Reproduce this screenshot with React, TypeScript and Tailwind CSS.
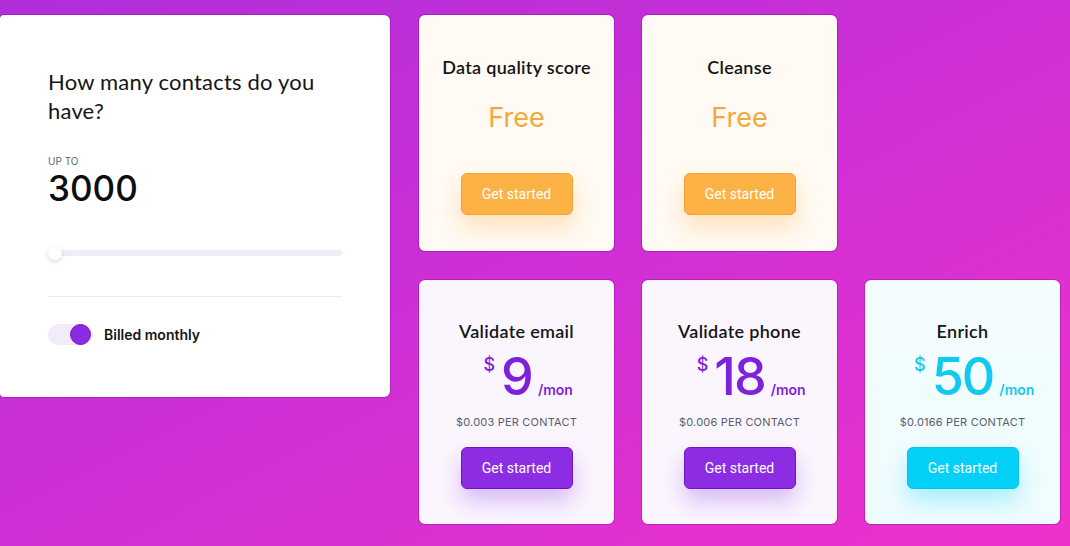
import React from "react";

type Plan = {
  title: string;
  price?: string;
  perContact?: string;
  tone: "orange" | "purple" | "cyan";
};

const topPlans: Plan[] = [
  { title: "Data quality score", tone: "orange" },
  { title: "Cleanse", tone: "orange" },
];

const bottomPlans: Plan[] = [
  { title: "Validate email", price: "9", perContact: "$0.003 PER CONTACT", tone: "purple" },
  { title: "Validate phone", price: "18", perContact: "$0.006 PER CONTACT", tone: "purple" },
  { title: "Enrich", price: "50", perContact: "$0.0166 PER CONTACT", tone: "cyan" },
];

const cardBg = {
  orange: "bg-[#fffaf3]",
  purple: "bg-[#fbf6fe]",
  cyan: "bg-gradient-to-b from-[#f4fdfe] to-[#effcfe]",
};

const priceColor = {
  orange: "text-[#f3a83a]",
  purple: "text-[#7e22d9]",
  cyan: "text-[#12c9ee]",
};

const buttonStyle = {
  orange:
    "bg-[#fdb246] border-[#efa236] shadow-[0_12px_22px_rgba(255,170,60,0.3)]",
  purple:
    "bg-[#8d2de3] border-[#6b17bd] shadow-[0_12px_22px_rgba(140,45,230,0.3)]",
  cyan: "bg-[#02d0f7] border-[#00c3ea] shadow-[0_12px_22px_rgba(0,210,250,0.3)]",
};

const titleFont = { fontFamily: "Lato, 'Noto Sans', sans-serif" };
const bodyFont = { fontFamily: "Inter, 'Noto Sans', sans-serif" };
const btnFont = { fontFamily: "Roboto, 'Liberation Sans', sans-serif" };

function GetStarted({ tone }: { tone: Plan["tone"] }) {
  return (
    <button
      style={btnFont}
      className={`w-[112px] h-[42px] rounded-md border text-[14px] text-white ${buttonStyle[tone]}`}
    >
      Get started
    </button>
  );
}

function FreeCard({ plan }: { plan: Plan }) {
  return (
    <div
      className={`h-[236px] rounded-md flex flex-col items-center pt-[40px] shadow-[0_0_0_1px_rgba(120,10,150,0.35)] ${cardBg[plan.tone]}`}
    >
      <h3 style={titleFont} className="text-[18px] leading-[24px] font-semibold tracking-[0.3px] text-[#151515]">
        {plan.title}
      </h3>
      <div
        style={bodyFont}
        className={`mt-[21px] text-[27px] leading-[36px] ${priceColor[plan.tone]}`}
      >
        Free
      </div>
      <div className="mt-[37px]">
        <GetStarted tone={plan.tone} />
      </div>
    </div>
  );
}

function PaidCard({ plan }: { plan: Plan }) {
  return (
    <div
      className={`h-[244px] rounded-md flex flex-col items-center pt-[39px] shadow-[0_0_0_1px_rgba(120,10,150,0.35)] ${cardBg[plan.tone]}`}
    >
      <h3 style={titleFont} className="text-[18px] leading-[24px] font-semibold tracking-[0.3px] text-[#151515]">
        {plan.title}
      </h3>
      {/* number stays centred, $ and /mon hang off either side */}
      <div
        style={bodyFont}
        className={`mt-[8px] w-full grid grid-cols-[1fr_auto_1fr] ${priceColor[plan.tone]}`}
      >
        <span className="justify-self-end self-start text-[18px] leading-none font-medium mt-[5px] mr-[6px]">
          $
        </span>
        <span className="text-[52px] leading-[52px] font-medium tracking-[-2px]">{plan.price}</span>
        <span className="justify-self-start self-end mb-[6px] ml-[6px] text-[14px] leading-[14px] font-semibold">
          /mon
        </span>
      </div>
      <div
        style={bodyFont}
        className="mt-[11px] text-[11px] leading-[16px] tracking-[0.2px] text-[#585e70]"
      >
        {plan.perContact}
      </div>
      <div className="mt-[17px]">
        <GetStarted tone={plan.tone} />
      </div>
    </div>
  );
}

function ContactsCard() {
  return (
    <div className="w-[390px] h-[382px] shrink-0 bg-white rounded-r-md rounded-l-sm px-[48px] pt-[52px] shadow-[0_0_0_1px_rgba(120,10,150,0.35)]">
      <h2 style={titleFont} className="text-[22px] leading-[29px] tracking-[0.2px] text-[#151515]">
        How many contacts do you
        <br />
        have?
      </h2>
      <div style={bodyFont} className="mt-[30px] text-[10px] leading-[12px] text-[#5d6478]">
        UP TO
      </div>
      <div style={bodyFont} className="text-[35px] leading-[42px] font-medium text-[#0d0d0d]">
        3000
      </div>
      <div className="mt-[37px] relative h-[14px] flex items-center">
        <div className="w-full h-[6px] rounded-full bg-[#f1ecfa]" />
        <div className="absolute left-0 top-0 w-[14px] h-[14px] rounded-full bg-white shadow-[0_2px_5px_rgba(60,40,90,0.18)]" />
      </div>
      <div className="mt-[36px] h-px bg-[#ecebf0]" />
      <div className="mt-[27px] flex items-center">
        <div className="w-[45px] h-[21px] rounded-full bg-[#f1ebfa] flex items-center justify-end pr-[2px]">
          <div className="w-[21px] h-[21px] rounded-full bg-[#8a2be2] border border-[#6c1cc0]" />
        </div>
        <span style={bodyFont} className="ml-[11px] text-[14px] font-semibold text-[#151515]">
          Billed monthly
        </span>
      </div>
    </div>
  );
}

export default function App() {
  return (
    <div className="w-[1070px] h-[546px] overflow-hidden bg-gradient-to-br from-[#b02ed9] via-[#cf2fd6] to-[#ee31cb] pt-[15px] flex">
      <ContactsCard />
      <div className="ml-[29px] grid grid-cols-[195px_195px_195px] grid-rows-[236px_244px] gap-x-[28px] gap-y-[29px]">
        {topPlans.map((p) => (
          <FreeCard key={p.title} plan={p} />
        ))}
        <div />
        {bottomPlans.map((p) => (
          <PaidCard key={p.title} plan={p} />
        ))}
      </div>
    </div>
  );
}
